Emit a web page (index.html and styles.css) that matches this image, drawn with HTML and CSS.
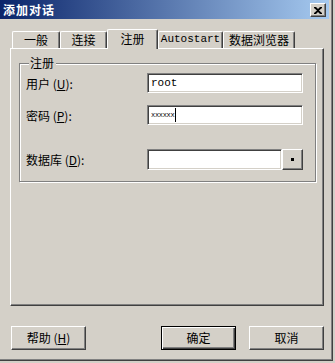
FILE: index.html
```html
<!DOCTYPE html>
<html lang="zh-CN">
<head>
	<meta charset="UTF-8">
	<title>添加对话</title>
	<link rel="stylesheet" href="styles.css">
</head>
<body>
	<div class="window">
		<div class="titlebar">
			<span class="title">添加对话</span>
			<span class="close">
				<svg width="8" height="7" viewBox="0 0 8 7"><path d="M0 0h2l2 2 2-2h2v1L5 3.5 8 6v1H6L4 5 2 7H0V6l3-2.5L0 1z" fill="#000"/></svg>
			</span>
		</div>

		<div class="tabs">
			<div class="tab t1">一般</div>
			<div class="tab t2">连接</div>
			<div class="tab t3 active">注册</div>
			<div class="tab t4 mono">Autostart</div>
			<div class="tab t5">数据浏览器</div>
		</div>

		<div class="panel">
			<fieldset class="group">
				<legend>注册</legend>
				<div class="row r1">
					<label>用户 (<u>U</u>):</label>
					<div class="field">root</div>
				</div>
				<div class="row r2">
					<label>密码 (<u>P</u>):</label>
					<div class="field pwd">xxxxxx<span class="caret"></span></div>
				</div>
				<div class="row r3">
					<label>数据库 (<u>D</u>):</label>
					<div class="field short"></div>
					<div class="browse"><span class="dot"></span></div>
				</div>
			</fieldset>
		</div>

		<div class="buttons">
			<div class="btn">帮助 (<u>H</u>)</div>
			<div class="spacer"></div>
			<div class="btn default">确定</div>
			<div class="btn">取消</div>
		</div>
	</div>
</body>
</html>
```

FILE: styles.css
```css
*{margin: 0;padding: 0;box-sizing: border-box;}
body {
	background: #d4d0c8;
	font-family: "Noto Sans CJK SC", "Liberation Sans", sans-serif;
	font-size: 12px;
	color: #000;
}
.window {
	width: 333px;
	height: 361px;
	border-right: 1px solid #404040;
	border-bottom: 1px solid #404040;
	box-shadow: inset -1px -1px #808080;
}
.titlebar {
	height: 19px;
	width: 329px;
	background: linear-gradient(to right, #0a246a, #a6caf0);
	display: flex;
	align-items: center;
	justify-content: space-between;
	padding: 0 3px 0 3px;
}
.title {
	color: #fff;
	font-weight: bold;
	font-size: 12px;
	letter-spacing: 1px;
	line-height: 19px;
}
.close {
	width: 16px;
	height: 14px;
	background: #d4d0c8;
	border: 1px solid;
	border-color: #fff #404040 #404040 #fff;
	box-shadow: inset -1px -1px #808080;
	display: flex;
	align-items: center;
	justify-content: center;
	margin-top: 1px;
}

/* tabs */
.tabs {
	display: flex;
	align-items: flex-end;
	padding-left: 12px;
	margin-top: 10px;
	height: 19px;
	position: relative;
	z-index: 2;
}
.tab {
	height: 17px;
	border: 1px solid;
	border-bottom: none;
	border-color: #fff #404040 #fff #fff;
	box-shadow: inset -1px 0 #808080;
	border-radius: 2px 2px 0 0;
	text-align: center;
	line-height: 15px;
	background: #d4d0c8;
}
.tab.active {
	height: 20px;
	margin-bottom: -1px;
	line-height: 18px;
}
.t1 {width: 48px;}
.t2 {width: 47px;}
.t3 {width: 51px;}
.t4 {width: 65px;}
.t5 {width: 72px;}
.mono {
	font-family: "Liberation Mono", monospace;
	font-size: 11px;
}

/* panel */
.panel {
	margin-left: 10px;
	width: 314px;
	height: 258px;
	border: 1px solid;
	border-color: #fff #404040 #404040 #fff;
	box-shadow: inset -1px -1px #808080;
	padding: 7px 0 0 8px;
}
.group {
	width: 297px;
	height: 126px;
	border: 1px solid #808080;
	box-shadow: inset 1px 1px #fff, 1px 1px #fff;
	padding: 3px 0 0 6px;
}
.group legend {
	margin-left: 3px;
	padding: 0 2px 0 1px;
	line-height: 14px;
	background: #d4d0c8;
}
.row {
	display: flex;
	align-items: center;
	height: 20px;
}
.row.r2 {margin-top: 12px;}
.row.r3 {margin-top: 24px; height: 21px;}
.row label {
	width: 121px;
}
.row u {
	text-decoration: underline;
}
.field {
	width: 156px;
	height: 20px;
	background: #fff;
	border: 1px solid;
	border-color: #808080 #fff #fff #808080;
	box-shadow: inset 1px 1px #404040, inset -1px -1px #d4d0c8;
	font-family: "Liberation Mono", monospace;
	font-size: 11px;
	line-height: 18px;
	padding-left: 3px;
	display: flex;
	align-items: center;
}
.field.pwd {
	font-size: 7px;
	letter-spacing: -0.3px;
}
.caret {
	width: 1px;
	height: 14px;
	background: #000;
	margin-left: 1px;
}
.field.short {
	width: 135px;
	height: 21px;
}
.browse {
	width: 21px;
	height: 21px;
	border: 1px solid;
	border-color: #fff #404040 #404040 #fff;
	box-shadow: inset -1px -1px #808080;
	display: flex;
	align-items: center;
	justify-content: center;
}
.dot {
	width: 3px;
	height: 3px;
	background: #000;
}

/* buttons */
.buttons {
	display: flex;
	margin-top: 20px;
	padding-left: 11px;
}
.btn {
	width: 75px;
	height: 24px;
	border: 1px solid;
	border-color: #fff #404040 #404040 #fff;
	box-shadow: inset -1px -1px #808080;
	text-align: center;
	line-height: 22px;
}
.btn.default {
	border: 1px solid #000;
	box-shadow: inset 1px 1px #fff, inset -1px -1px #404040, inset -2px -2px #808080;
	margin-right: 13px;
}
.spacer {
	width: 75px;
}
```
